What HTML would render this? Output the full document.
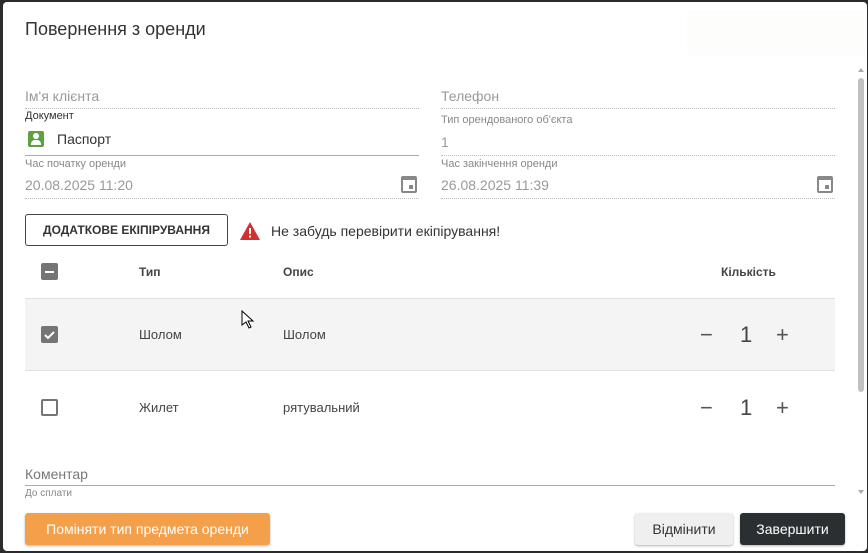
<!DOCTYPE html><html><head><meta charset="utf-8"><style>
*{box-sizing:border-box;margin:0;padding:0}
body{width:868px;height:553px;background:#2b2b2b;font-family:"Liberation Sans",sans-serif;position:relative;overflow:hidden;color:#333}
.dlg{position:absolute;left:3px;top:2px;width:864px;height:549px;background:#fff;border-radius:4px}
.a{position:absolute;white-space:nowrap}
.lab{font-size:11px;color:#888}
.ph{font-size:14px;color:#999}
.dot{position:absolute;height:0;border-top:1px dotted #bbb}
.sol{position:absolute;height:0;border-top:1px solid #aaa}
.cal{position:absolute;width:16px;height:17px;border:2px solid #888;border-top-width:4px;border-radius:2px}
.cal:after{content:"";position:absolute;right:2px;bottom:2px;width:4px;height:4px;background:#888}
.cb{position:absolute;width:17px;height:17px;border-radius:2px}
</style></head><body>
<div class="dlg"></div>
<div class="a" style="left:25px;top:19px;font-size:18px;color:#333">Повернення з оренди</div>
<div class="a" style="left:687px;top:10px;width:180px;height:45px;background:#fdfdfb"></div>

<div class="a ph" style="left:25px;top:88px">Ім'я клієнта</div>
<div class="dot" style="left:25px;top:108px;width:394px"></div>
<div class="a" style="left:25px;top:110px;font-size:11px;color:#333">Документ</div>
<div class="a" style="left:28px;top:131px;width:16px;height:16px;background:#5fa040;border-radius:2px"></div>
<div class="a" style="left:33px;top:133px;width:6px;height:6px;background:#fff;border-radius:50%"></div>
<div class="a" style="left:31px;top:140px;width:10px;height:5px;background:#fff;border-radius:4px 4px 0 0"></div>
<div class="a" style="left:57px;top:131px;font-size:14px;color:#333">Паспорт</div>
<div class="sol" style="left:25px;top:155px;width:394px"></div>
<div class="a lab" style="left:25px;top:158px">Час початку оренди</div>
<div class="a ph" style="left:25px;top:177px">20.08.2025 11:20</div>
<div class="cal" style="left:401px;top:176px"></div>
<div class="dot" style="left:25px;top:198px;width:394px"></div>

<div class="a ph" style="left:441px;top:88px">Телефон</div>
<div class="dot" style="left:441px;top:108px;width:394px"></div>
<div class="a lab" style="left:441px;top:114px">Тип орендованого об'єкта</div>
<div class="a ph" style="left:441px;top:134px">1</div>
<div class="dot" style="left:441px;top:155px;width:394px"></div>
<div class="a lab" style="left:441px;top:158px">Час закінчення оренди</div>
<div class="a ph" style="left:441px;top:177px">26.08.2025 11:39</div>
<div class="cal" style="left:817px;top:176px"></div>
<div class="dot" style="left:441px;top:198px;width:394px"></div>

<div class="a" style="left:25px;top:214px;width:203px;height:32px;border:1px solid #444;border-radius:3px;font-size:12px;font-weight:bold;color:#333;text-align:center;line-height:30px">ДОДАТКОВЕ ЕКІПІРУВАННЯ</div>
<svg class="a" style="left:240px;top:222px" width="20" height="18" viewBox="0 0 20 18"><path d="M10 0L20 18H0Z" fill="#d32f2f"/><rect x="9" y="6" width="2" height="6" fill="#fff"/><rect x="9" y="13.5" width="2" height="2" fill="#fff"/></svg>
<div class="a" style="left:271px;top:223px;font-size:14px;color:#333">Не забудь перевірити екіпірування!</div>

<div class="cb" style="left:41px;top:263px;background:#757575"></div>
<div class="a" style="left:45px;top:271px;width:9px;height:2px;background:#fff"></div>
<div class="a" style="left:139px;top:265px;font-size:12px;font-weight:bold;color:#444">Тип</div>
<div class="a" style="left:283px;top:265px;font-size:12px;font-weight:bold;color:#444">Опис</div>
<div class="a" style="left:721px;top:265px;font-size:12px;font-weight:bold;color:#444">Кількість</div>

<div class="a" style="left:25px;top:298px;width:810px;height:73px;background:#f4f4f4;border-top:1px solid #e0e0e0;border-bottom:1px solid #e0e0e0"></div>
<div class="cb" style="left:41px;top:326px;background:#757575"></div>
<svg class="a" style="left:41px;top:326px" width="17" height="17"><path d="M4 9l3 3 6-6" stroke="#fff" stroke-width="2" fill="none"/></svg>
<div class="a" style="left:139px;top:327px;font-size:13px;color:#444">Шолом</div>
<div class="a" style="left:283px;top:327px;font-size:13px;color:#444">Шолом</div>
<div class="a" style="left:700px;top:322px;font-size:22px;color:#555">−</div>
<div class="a" style="left:740px;top:322px;font-size:22px;color:#444">1</div>
<div class="a" style="left:776px;top:322px;font-size:22px;color:#555">+</div>
<svg class="a" style="left:241px;top:310px" width="14" height="20"><path d="M1 1v14l4-3 3 6 2-1-3-6h5z" fill="#fff" stroke="#000"/></svg>

<div class="cb" style="left:41px;top:399px;border:2px solid #757575"></div>
<div class="a" style="left:139px;top:400px;font-size:13px;color:#444">Жилет</div>
<div class="a" style="left:283px;top:400px;font-size:13px;color:#444">рятувальний</div>
<div class="a" style="left:700px;top:395px;font-size:22px;color:#555">−</div>
<div class="a" style="left:740px;top:395px;font-size:22px;color:#444">1</div>
<div class="a" style="left:776px;top:395px;font-size:22px;color:#555">+</div>

<div class="a ph" style="left:25px;top:466px;color:#777">Коментар</div>
<div class="sol" style="left:25px;top:485px;width:810px"></div>
<div class="a lab" style="left:25px;top:488px;font-size:10px">До сплати</div>

<div class="a" style="left:858px;top:68px;width:0;height:0;border:3px solid transparent;border-bottom:4px solid #aaa;border-top:0"></div>
<div class="a" style="left:858px;top:78px;width:6px;height:314px;background:#c2c2c2;border-radius:3px"></div>
<div class="a" style="left:858px;top:490px;width:0;height:0;border:3px solid transparent;border-top:4px solid #aaa;border-bottom:0"></div>

<div class="a" style="left:25px;top:513px;width:245px;height:32px;background:#f4a04b;border-radius:3px;color:#fff;font-size:14px;text-align:center;line-height:32px;box-shadow:0 1px 2px rgba(0,0,0,.3)">Поміняти тип предмета оренди</div>
<div class="a" style="left:635px;top:513px;width:98px;height:32px;background:#efefef;border-radius:3px;color:#333;font-size:14px;text-align:center;line-height:32px;box-shadow:0 1px 2px rgba(0,0,0,.3)">Відмінити</div>
<div class="a" style="left:740px;top:513px;width:105px;height:32px;background:#2a3032;border-radius:3px;color:#fff;font-size:14px;text-align:center;line-height:32px;box-shadow:0 1px 2px rgba(0,0,0,.3)">Завершити</div>
</body></html>
